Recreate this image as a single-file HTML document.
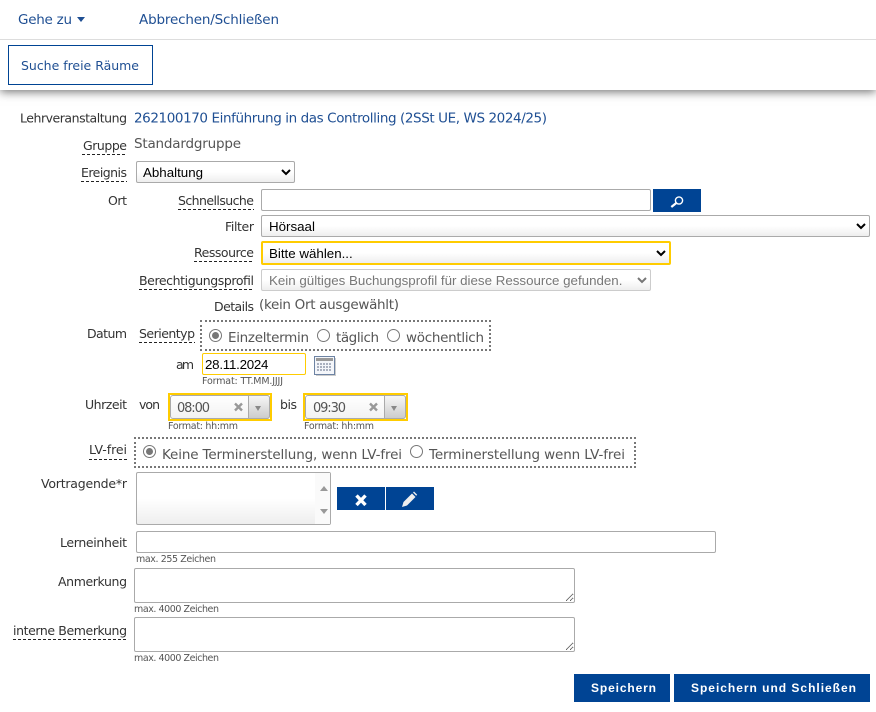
<!DOCTYPE html>
<html lang="de">
<head>
<meta charset="utf-8">
<title>Suche freie Räume</title>
<style>
html,body{margin:0;padding:0;background:#fff}
body{width:876px;height:712px;position:relative;overflow:hidden;font-family:"DejaVu Sans","Liberation Sans",sans-serif}
.a{position:absolute;box-sizing:border-box}
svg.t{position:absolute;left:0;top:0;z-index:5;pointer-events:none}
svg.t text{font-family:"DejaVu Sans","Liberation Sans",sans-serif;font-size:12.5px;fill:#333}
svg.t text.b{fill:#1f4f93}
svg.t text.g{fill:#555}
svg.t text.s{font-size:9.5px;fill:#555}
svg.t text.w{font-family:"Liberation Sans",sans-serif;font-weight:bold;font-size:12px;fill:#fff}
svg.t line{stroke:#222;stroke-width:1;stroke-dasharray:3 2}
select,input,textarea{position:absolute;box-sizing:border-box;margin:0;font-family:"Liberation Sans",sans-serif;font-size:13.33px;color:#000;outline:none}
select{border:1px solid #aaa;border-radius:2px;background:linear-gradient(#fff 0,#fff 50%,#eee 100%);padding:0 0 0 3px}
input,textarea{border:1px solid #aaa;border-radius:2px;background:#fff;resize:both}
.dot{border:2px dotted #777}
.r{width:13px;height:13px;border:1px solid #777;border-radius:50%;background:#fff}
.r.on:after{content:"";position:absolute;left:2px;top:2px;width:7px;height:7px;border-radius:50%;background:#777}
.blue{background:#004494}
.combo{border:2px solid #fc0;background:#fff}
.combo i{position:absolute;left:0;top:0;right:0;bottom:0;border:1px solid #aaa;border-radius:3px;background:linear-gradient(#fff,#f2f2f2)}
.combo b{position:absolute;right:0;top:0;bottom:0;width:20px;border:1px solid #aaa;border-radius:0 3px 3px 0;background:linear-gradient(#f6f6f6,#ccc)}
.combo b:after{content:"";position:absolute;left:6px;top:10px;border:3.5px solid transparent;border-top:5px solid #888;border-bottom:0}
</style>
</head>
<body>
<!-- toolbar -->
<div class="a" style="left:0;top:0;width:876px;height:90px;background:#fff;box-shadow:0 2px 9px rgba(0,0,0,.55);z-index:1"></div>
<div class="a" style="left:0;top:39px;width:876px;height:1px;background:#ddd;z-index:2"></div>
<div class="a" style="left:8px;top:45px;width:145px;height:40px;border:1px solid #004494;z-index:2"></div>
<div class="a" style="left:77px;top:17px;border:4.5px solid transparent;border-top:5px solid #1f4f93;border-bottom:0;z-index:2"></div>

<!-- selects & inputs -->
<select style="left:136px;top:161px;width:159px;height:22px;padding-left:2px"><option>Abhaltung</option></select>
<input style="left:261px;top:189px;width:390px;height:22px" value="">
<div class="a blue" style="left:653px;top:189px;width:48px;height:23px"></div>
<select style="left:261px;top:215px;width:609px;height:22px"><option>Hörsaal</option></select>
<select style="left:261px;top:241px;width:410px;height:24px;border:2px solid #fc0;padding-left:2px"><option>Bitte wählen...</option></select>
<select disabled style="left:261px;top:269px;width:390px;height:22px;color:#777;border-color:#ccc;opacity:1"><option>Kein gültiges Buchungsprofil für diese Ressource gefunden.</option></select>

<!-- Serientyp -->
<div class="a dot" style="left:200px;top:320px;width:291px;height:31px"></div>
<div class="a r on" style="left:209px;top:329px"></div>
<div class="a r" style="left:317px;top:329px"></div>
<div class="a r" style="left:387px;top:329px"></div>

<input style="left:202px;top:353px;width:104px;height:22px;border-color:#fc0;padding:0 2px;letter-spacing:-.25px" value="28.11.2024">
<!-- calendar -->
<svg class="a" style="left:314px;top:355px" width="23" height="22" viewBox="0 0 23 22">
<rect x="2" y="3" width="20" height="18" fill="#ccc"/>
<rect x="0.500" y="1.500" width="20" height="18" fill="#f4f6fa" stroke="#6d83a3"/>
<rect x="2" y="3" width="17" height="3" fill="#999"/>
<g fill="#a9b0bf"><rect x="3" y="8" width="2" height="2"/><rect x="6" y="8" width="2" height="2"/><rect x="9" y="8" width="2" height="2"/><rect x="12" y="8" width="2" height="2"/><rect x="15" y="8" width="2" height="2"/><rect x="3" y="11" width="2" height="2"/><rect x="6" y="11" width="2" height="2"/><rect x="9" y="11" width="2" height="2"/><rect x="12" y="11" width="2" height="2"/><rect x="15" y="11" width="2" height="2"/><rect x="3" y="14" width="2" height="2"/><rect x="6" y="14" width="2" height="2"/><rect x="9" y="14" width="2" height="2"/><rect x="12" y="14" width="2" height="2"/><rect x="15" y="14" width="2" height="2"/></g>
</svg>

<!-- time combos -->
<div class="a combo" style="left:168px;top:393px;width:104px;height:28px"><i></i><b></b></div>
<div class="a combo" style="left:303px;top:393px;width:105px;height:28px"><i></i><b></b></div>

<!-- LV-frei -->
<div class="a dot" style="left:134px;top:437px;width:502px;height:31px"></div>
<div class="a r on" style="left:143px;top:445px"></div>
<div class="a r" style="left:410px;top:445px"></div>

<!-- Vortragende -->
<div class="a" style="left:136px;top:472px;width:195px;height:53px;border:1px solid #aaa;border-radius:2px;background:linear-gradient(#fff 0,#fff 50%,#eee 100%)">
  <div class="a" style="right:0;top:0;width:15px;height:51px;background:#fafafa"></div>
  <div class="a" style="right:2px;top:13px;border:4.5px solid transparent;border-bottom:5px solid #999;border-top:0"></div>
  <div class="a" style="right:2px;top:36px;border:4.5px solid transparent;border-top:5px solid #999;border-bottom:0"></div>
</div>
<div class="a blue" style="left:337px;top:487px;width:48px;height:23px"></div>
<div class="a blue" style="left:386px;top:487px;width:48px;height:23px"></div>

<input style="left:136px;top:531px;width:580px;height:22px" value="">
<textarea style="left:134px;top:568px;width:441px;height:35px"></textarea>
<textarea style="left:134px;top:617px;width:441px;height:35px"></textarea>

<div class="a blue" style="left:574px;top:674px;width:96px;height:28px"></div>
<div class="a blue" style="left:674px;top:674px;width:196px;height:28px"></div>

<!-- all text and small icons -->
<svg class="t" width="876" height="712" viewBox="0 0 876 712">
<text class="b" x="18" y="24" textLength="54" lengthAdjust="spacing" style="font-size:13.5px">Gehe zu</text>
<text class="b" x="139" y="24" textLength="140" lengthAdjust="spacing" style="font-size:13.500px">Abbrechen/Schließen</text>
<text class="b" x="21" y="70" textLength="118" lengthAdjust="spacing">Suche freie Räume</text>

<text x="20" y="122.500" textLength="107" lengthAdjust="spacing">Lehrveranstaltung</text>
<text class="b" x="134" y="122.500" textLength="413" lengthAdjust="spacing" style="font-size:13.500px">262100170 Einführung in das Controlling (2SSt UE, WS 2024/25)</text>
<text x="83" y="150" textLength="44" lengthAdjust="spacing">Gruppe</text><line x1="82" y1="154.500" x2="127" y2="154.500"/>
<text class="g" x="134" y="148" textLength="107" lengthAdjust="spacing" style="font-size:13.500px">Standardgruppe</text>
<text x="81" y="177" textLength="46" lengthAdjust="spacing">Ereignis</text><line x1="81" y1="181.500" x2="127" y2="181.500"/>
<text x="108" y="205" textLength="19" lengthAdjust="spacing">Ort</text>
<text x="178" y="205" textLength="76" lengthAdjust="spacing">Schnellsuche</text><line x1="178" y1="209.500" x2="254" y2="209.500"/>
<text x="225" y="231" textLength="29" lengthAdjust="spacing">Filter</text>
<text x="194" y="257" textLength="60" lengthAdjust="spacing">Ressource</text><line x1="194" y1="261.500" x2="254" y2="261.500"/>
<text x="139" y="285" textLength="115" lengthAdjust="spacing">Berechtigungsprofil</text><line x1="139" y1="289.500" x2="254" y2="289.500"/>
<text x="214" y="311" textLength="40" lengthAdjust="spacing">Details</text>
<text x="259" y="309" textLength="140" lengthAdjust="spacing" class="g" style="font-size:13.500px">(kein Ort ausgewählt)</text>
<text x="87" y="338" textLength="40" lengthAdjust="spacing">Datum</text>
<text x="139" y="338" textLength="56" lengthAdjust="spacing">Serientyp</text><line x1="139" y1="342.500" x2="195" y2="342.500"/>
<text class="g" x="228" y="342" textLength="81" lengthAdjust="spacing" style="font-size:13.500px">Einzeltermin</text>
<text class="g" x="336" y="342" textLength="43" lengthAdjust="spacing" style="font-size:13.500px">täglich</text>
<text class="g" x="406" y="342" textLength="78" lengthAdjust="spacing" style="font-size:13.500px">wöchentlich</text>
<text x="176" y="369" textLength="18" lengthAdjust="spacing">am</text>
<text class="s" x="202" y="384" textLength="81" lengthAdjust="spacing">Format: TT.MM.JJJJ</text>
<text x="85" y="409" textLength="42" lengthAdjust="spacing">Uhrzeit</text>
<text x="139" y="409" textLength="21" lengthAdjust="spacing">von</text>
<text class="g" x="177" y="412" textLength="33" lengthAdjust="spacing" style="font-size:13px">08:00</text>
<text x="280" y="409" textLength="17" lengthAdjust="spacing">bis</text>
<text class="g" x="313" y="412" textLength="33" lengthAdjust="spacing" style="font-size:13px">09:30</text>
<path d="M235 403.500l7 7m0-7l-7 7M370 403.500l7 7m0-7l-7 7" stroke="#999" stroke-width="2.400" fill="none"/>
<text class="s" x="168" y="429" textLength="70" lengthAdjust="spacing">Format: hh:mm</text>
<text class="s" x="304" y="429" textLength="70" lengthAdjust="spacing">Format: hh:mm</text>
<text x="89" y="454" textLength="38" lengthAdjust="spacing">LV-frei</text><line x1="89" y1="459.500" x2="127" y2="459.500"/>
<text class="g" x="162" y="459" textLength="240" lengthAdjust="spacing" style="font-size:13.500px">Keine Terminerstellung, wenn LV-frei</text>
<text class="g" x="429" y="459" textLength="196" lengthAdjust="spacing" style="font-size:13.500px">Terminerstellung wenn LV-frei</text>
<text x="41" y="488" textLength="86" lengthAdjust="spacing">Vortragende*r</text>
<text x="60" y="547" textLength="67" lengthAdjust="spacing">Lerneinheit</text>
<text class="s" x="136" y="562" textLength="80" lengthAdjust="spacing">max. 255 Zeichen</text>
<text x="58" y="586" textLength="69" lengthAdjust="spacing">Anmerkung</text>
<text class="s" x="134" y="612" textLength="85" lengthAdjust="spacing">max. 4000 Zeichen</text>
<text x="13" y="635" textLength="114" lengthAdjust="spacing">interne Bemerkung</text><line x1="13" y1="639.500" x2="127" y2="639.500"/>
<text class="s" x="134" y="661" textLength="85" lengthAdjust="spacing">max. 4000 Zeichen</text>
<text class="w" x="591" y="692" textLength="65" lengthAdjust="spacing">Speichern</text>
<text class="w" x="691" y="692" textLength="165" lengthAdjust="spacing">Speichern und Schließen</text>
<!-- search icon -->
<circle cx="679" cy="200.500" r="3.600" fill="none" stroke="#fff" stroke-width="1.400"/>
<path d="M676.300 203l-5 4" stroke="#fff" stroke-width="2.200" fill="none"/>
<!-- x icon -->
<path d="M356.500 495.500l9 9.500m0-9.500l-9 9.500" stroke="#fff" stroke-width="3.400" fill="none"/>
<!-- pencil icon -->
<path d="M402 507l1.500-5 8.500-8.500 3.500 3.500-8.500 8.500z" fill="#eee"/>
<path d="M413 492.500l1-1 3.200 3.200-1 1z" fill="#eee"/>
</svg>
</body>
</html>
